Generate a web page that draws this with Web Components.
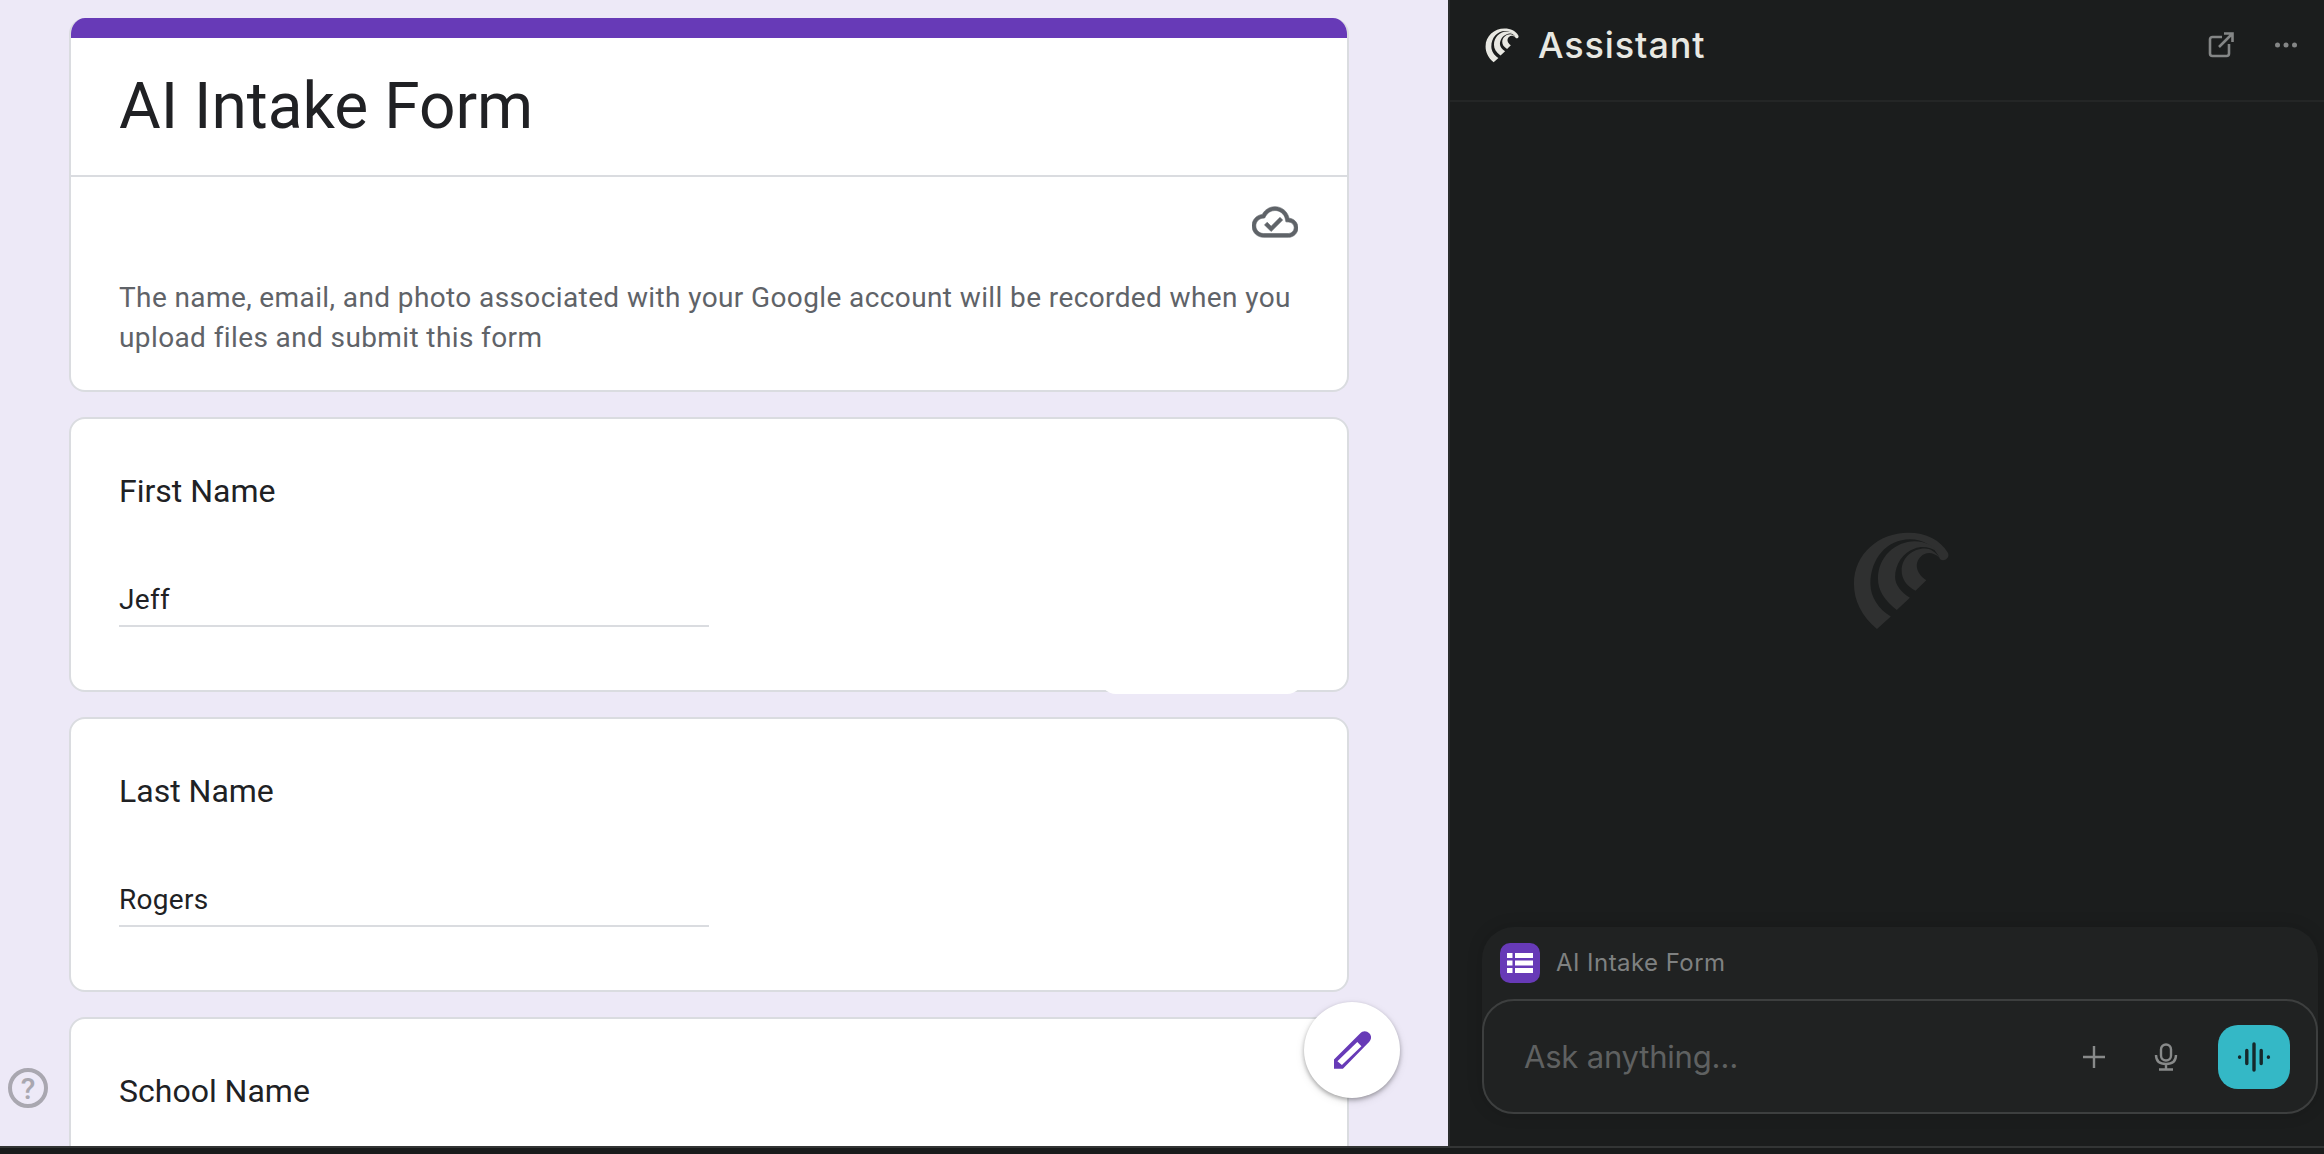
<!DOCTYPE html>
<html>
<head>
<meta charset="utf-8">
<title>AI Intake Form</title>
<style>
    html, body {
        height: 100%;
        margin: 0;
        overflow: hidden;
    }

    body {
        background: #191b1b;
        display: flex;
        flex-direction: column;
        font-family: Roboto, "Liberation Sans", sans-serif;
    }

    #page {
        display: flex;
        height: 1146px;
    }

    #strip {
        background: #191b1b;
        border-top: 2px solid #333535;
        flex: 1;
    }
</style>
</head>
<body>
    <div id="page">
        <form-pane>
            <form-header
                title-text="AI Intake Form"
                notice="The name, email, and photo associated with your Google account will be recorded when you upload files and submit this form"></form-header>
            <form-question label="First Name" value="Jeff"></form-question>
            <form-question label="Last Name" value="Rogers"></form-question>
            <form-question label="School Name" value=""></form-question>
        </form-pane>
        <assistant-panel></assistant-panel>
    </div>
    <div id="strip"></div>

    <script>
        class WaveLogo extends HTMLElement {
            constructor() {
                super();
                this.attachShadow({ mode: 'open' });
                this.shadowRoot.innerHTML = `
                    <style>
                        :host {
                            display: block;
                            line-height: 0;
                        }

                        svg {
                            fill: currentColor;
                            height: 100%;
                            width: 100%;
                        }
                    </style>
                    <svg viewBox="95 25 296 304">
                        <path d="M170 323C122 282 100 235 100 185C100 95 175 30 265 30C320 30 362 52 385 90C393 104 378 120 362 111C345 70 310 50 270 50C200 50 150 110 150 185C150 225 175 262 212 285Z"/>
                        <path d="M230 265C192 235 173 205 173 170C173 105 225 56 285 56C315 56 340 68 358 90C330 72 305 70 285 78C250 90 225 125 225 165C225 190 245 212 270 228Z"/>
                        <path d="M287 207C258 190 245 170 245 145C245 105 280 78 315 78C332 78 348 88 360 106C340 88 318 88 303 103C285 120 285 150 320 175Z"/>
                    </svg>
                `;
            }
        }

        class FormPane extends HTMLElement {
            constructor() {
                super();
                this.attachShadow({ mode: 'open' });
                this.shadowRoot.innerHTML = `
                    <style>
                        :host {
                            background: #ede9f7;
                            box-sizing: border-box;
                            display: block;
                            height: 1146px;
                            overflow: hidden;
                            padding: 18px 99px 0 69px;
                            position: relative;
                            width: 1448px;
                        }

                        #stack {
                            display: flex;
                            flex-direction: column;
                            gap: 25px;
                        }

                        #blob {
                            background: #fff;
                            border-radius: 0 0 16px 16px;
                            height: 20px;
                            left: 1100px;
                            position: absolute;
                            top: 674px;
                            width: 203px;
                        }

                        #help {
                            align-items: center;
                            border: 4px solid #a9a7b0;
                            border-radius: 50%;
                            box-sizing: border-box;
                            color: #a9a7b0;
                            display: flex;
                            font-size: 30px;
                            font-weight: 500;
                            height: 40px;
                            justify-content: center;
                            left: 8px;
                            position: absolute;
                            top: 1068px;
                            width: 40px;
                        }

                        #fab {
                            align-items: center;
                            background: #fff;
                            border-radius: 50%;
                            box-shadow: 0 2px 4px rgba(0, 0, 0, 0.3), 0 3px 10px rgba(0, 0, 0, 0.1);
                            display: flex;
                            height: 96px;
                            justify-content: center;
                            left: 1304px;
                            position: absolute;
                            top: 1002px;
                            width: 96px;
                        }

                        #fab svg {
                            fill: #673ab7;
                            height: 38px;
                            width: 37px;
                        }
                    </style>
                    <div id="stack"><slot></slot></div>
                    <div id="blob"></div>
                    <div id="help">?</div>
                    <div id="fab">
                        <svg viewBox="222 155 108 110">
                            <path fill-rule="evenodd" d="M222 265V238L298 162C306 153 317 153 325 161C332 168 332 178 325 186L248 265ZM232 243L245 254L302 199L290 187Z"/>
                        </svg>
                    </div>
                `;
            }
        }

        class FormHeader extends HTMLElement {
            constructor() {
                super();
                this.attachShadow({ mode: 'open' });
                this.shadowRoot.innerHTML = `
                    <style>
                        :host {
                            background: #fff;
                            border: 2px solid #dadce0;
                            border-radius: 16px;
                            border-top: none;
                            box-sizing: border-box;
                            display: block;
                            height: 374px;
                            overflow: hidden;
                        }

                        #bar {
                            background: #673ab7;
                            height: 20px;
                            margin: 0 -2px;
                        }

                        h1 {
                            border-bottom: 2px solid #dadce0;
                            color: #202124;
                            font-size: 64px;
                            font-weight: 400;
                            height: 113px;
                            line-height: 90px;
                            margin: 0;
                            padding: 24px 0 0 48px;
                        }

                        #saved {
                            display: flex;
                            justify-content: flex-end;
                            padding: 22px 49px 0 0;
                        }

                        #saved svg {
                            fill: #5f6368;
                            height: 46px;
                            stroke: #5f6368;
                            stroke-width: 0.3;
                            width: 46px;
                        }

                        p {
                            color: #5f6368;
                            font-size: 28px;
                            letter-spacing: 0.39px;
                            line-height: 40px;
                            margin: 33px 0 0;
                            padding: 0 50px 0 48px;
                        }
                    </style>
                    <div id="bar"></div>
                    <h1></h1>
                    <div id="saved">
                        <svg viewBox="0 0 24 24">
                            <path d="M19.35 10.04C18.67 6.59 15.64 4 12 4 9.11 4 6.6 5.64 5.35 8.04 2.34 8.36 0 10.91 0 14c0 3.31 2.69 6 6 6h13c2.76 0 5-2.24 5-5 0-2.64-2.05-4.78-4.65-4.96zM19 18H6c-2.21 0-4-1.79-4-4 0-2.05 1.53-3.76 3.56-3.97l1.07-.11.5-.95C8.08 7.14 9.94 6 12 6c2.62 0 4.88 1.86 5.39 4.43l.3 1.5 1.53.11c1.56.1 2.78 1.41 2.78 2.96 0 1.65-1.35 3-3 3zm-9-3.82l-2.09-2.09L6.5 13.5 10 17l6.01-6.01-1.41-1.41z"/>
                        </svg>
                    </div>
                    <p></p>
                `;
            }

            connectedCallback() {
                this.shadowRoot.querySelector('h1').textContent = this.getAttribute('title-text');
                this.shadowRoot.querySelector('p').textContent = this.getAttribute('notice');
            }
        }

        class FormQuestion extends HTMLElement {
            constructor() {
                super();
                this.attachShadow({ mode: 'open' });
                this.shadowRoot.innerHTML = `
                    <style>
                        :host {
                            background: #fff;
                            border: 2px solid #dadce0;
                            border-radius: 16px;
                            box-sizing: border-box;
                            color: #202124;
                            display: block;
                            height: 275px;
                            padding: 52px 48px 0;
                        }

                        #label {
                            font-size: 32px;
                            line-height: 40px;
                        }

                        #answer {
                            border-bottom: 2px solid #dadce0;
                            box-sizing: border-box;
                            font-size: 28px;
                            height: 47px;
                            letter-spacing: 0.3px;
                            line-height: 40px;
                            margin-top: 69px;
                            width: 590px;
                        }
                    </style>
                    <div id="label"></div>
                    <div id="answer"></div>
                `;
            }

            connectedCallback() {
                this.shadowRoot.querySelector('#label').textContent = this.getAttribute('label');
                const value = this.getAttribute('value');
                const answer = this.shadowRoot.querySelector('#answer');
                if (value) {
                    answer.textContent = value;
                } else {
                    answer.remove();
                }
            }
        }

        class AssistantPanel extends HTMLElement {
            constructor() {
                super();
                this.attachShadow({ mode: 'open' });
                this.shadowRoot.innerHTML = `
                    <style>
                        :host {
                            background: #1b1d1d;
                            border-left: 2px solid #2a2c2c;
                            display: flex;
                            flex: 1;
                            flex-direction: column;
                            font-family: Inter, "Liberation Sans", sans-serif;
                            height: 1146px;
                            overflow: hidden;
                        }

                        header {
                            align-items: center;
                            border-bottom: 2px solid #242626;
                            box-sizing: border-box;
                            display: flex;
                            flex: none;
                            height: 102px;
                            padding: 0 27px 10px 35px;
                        }

                        header wave-logo {
                            color: #e8e8e2;
                            height: 35px;
                            width: 34px;
                        }

                        h2 {
                            color: #e8e8e2;
                            flex: 1;
                            font-size: 36px;
                            font-weight: 500;
                            letter-spacing: 0.9px;
                            margin: 0 0 0 19px;
                        }

                        #share {
                            fill: none;
                            height: 26px;
                            margin-right: 41px;
                            stroke: #848686;
                            stroke-width: 2.6;
                            width: 26px;
                        }

                        #dots {
                            fill: #848686;
                            height: 6px;
                            width: 22px;
                        }

                        #empty {
                            display: grid;
                            flex: 1;
                            padding: 132px 0 0 28px;
                            place-items: center;
                        }

                        #empty wave-logo {
                            color: #2f3030;
                            height: 100px;
                            width: 98px;
                        }

                        #composer {
                            background: #202222;
                            border-radius: 32px;
                            box-shadow: 0 0 16px rgba(0, 0, 0, 0.15);
                            flex: none;
                            margin: 0 6px 32px 32px;
                        }

                        #attached {
                            align-items: center;
                            color: #7f8181;
                            display: flex;
                            font-size: 24px;
                            gap: 16px;
                            height: 72px;
                            letter-spacing: 0.45px;
                            padding: 0 0 0 18px;
                        }

                        #attached span {
                            margin-top: -2px;
                        }

                        #form-icon {
                            background: #673ab7;
                            border-radius: 10px;
                            display: block;
                            height: 40px;
                            width: 40px;
                        }

                        #input {
                            align-items: center;
                            border: 2px solid #3d3f3f;
                            border-radius: 32px;
                            box-sizing: border-box;
                            display: flex;
                            height: 115px;
                            padding: 0 26px 0 40px;
                        }

                        #placeholder {
                            color: #5f6161;
                            flex: 1;
                            font-size: 31px;
                            letter-spacing: -0.2px;
                        }

                        #plus {
                            height: 22px;
                            margin-right: 49px;
                            stroke: #888a8a;
                            stroke-width: 2.4;
                            width: 22px;
                        }

                        #mic {
                            fill: none;
                            height: 28px;
                            margin-right: 40px;
                            stroke: #888a8a;
                            stroke-width: 2.4;
                            width: 24px;
                        }

                        #voice {
                            align-items: center;
                            background: #34b8c6;
                            border-radius: 20px;
                            display: flex;
                            height: 64px;
                            justify-content: center;
                            width: 72px;
                        }

                        #voice svg {
                            height: 30px;
                            stroke: #16282b;
                            stroke-linecap: round;
                            stroke-width: 3.4;
                            width: 34px;
                        }
                    </style>
                    <header>
                        <wave-logo></wave-logo>
                        <h2>Assistant</h2>
                        <svg id="share" viewBox="0 0 26 26">
                            <path d="M14 5H4.5C3 5 2 6 2 7.500V21.500C2 23 3 24 4.500 24H18.500C20 24 21 23 21 21.500V12"/>
                            <path d="M11 15L24 2M16 1.500H24.500V10"/>
                        </svg>
                        <svg id="dots" viewBox="0 0 22 6">
                            <circle cx="2.500" cy="3" r="2.500"/>
                            <circle cx="11" cy="3" r="2.500"/>
                            <circle cx="19.500" cy="3" r="2.500"/>
                        </svg>
                    </header>
                    <div id="empty"><wave-logo></wave-logo></div>
                    <div id="composer">
                        <div id="attached">
                            <svg id="form-icon" viewBox="0 0 40 40">
                                <path fill="#fff" d="M7 10H12.500V15H7ZM15 10H33V15H15ZM7 17.500H12.500V22.500H7ZM15 17.500H33V22.500H15ZM7 25H12.500V30H7ZM15 25H33V30H15Z"/>
                            </svg>
                            <span>AI Intake Form</span>
                        </div>
                        <div id="input">
                            <span id="placeholder">Ask anything…</span>
                            <svg id="plus" viewBox="0 0 22 22"><path d="M11 0V22M0 11H22"/></svg>
                            <svg id="mic" viewBox="0 0 24 28">
                                <rect x="7" y="1.500" width="10" height="16" rx="5"/>
                                <path d="M2 12C2 18 6 21 12 21C18 21 22 18 22 12M12 21V26.500M5 26.500H19"/>
                            </svg>
                            <div id="voice">
                                <svg viewBox="0 0 34 30">
                                    <path d="M2.600 15V15.200M9.800 8.500V21.500"/>
                                    <path d="M17 2V28"/>
                                    <path d="M24.200 8.500V21.500M31.400 15V15.200"/>
                                </svg>
                            </div>
                        </div>
                    </div>
                `;
            }
        }

        customElements.define('wave-logo', WaveLogo);
        customElements.define('form-pane', FormPane);
        customElements.define('form-header', FormHeader);
        customElements.define('form-question', FormQuestion);
        customElements.define('assistant-panel', AssistantPanel);
    </script>
</body>
</html>
